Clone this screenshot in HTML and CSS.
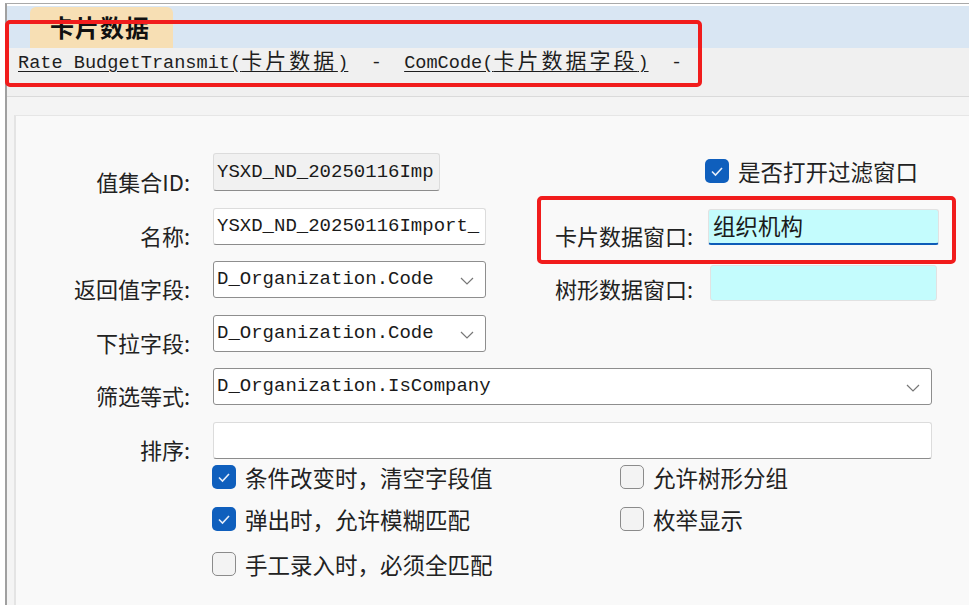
FILE: index.html
```html
<!DOCTYPE html>
<html lang="zh-CN">
<head>
<meta charset="utf-8">
<title>卡片数据</title>
<link rel="stylesheet" href="styles.css">
</head>
<body>
<div class="window">
  <div class="tabbar">
    <div class="tab">卡片数据</div>
  </div>
  <div class="linkrow"><a class="lnk">Rate BudgetTransmit(<span class="cjk">卡片数据</span>)</a><span class="sep">  -  </span><a class="lnk">ComCode(<span class="cjk">卡片数据字段</span>)</a><span class="sep">  -</span></div>
  <div class="content">
    <div class="panel">
      <div class="form">
        <label class="lbl r1">值集合ID:</label>
        <div class="field ro r1 w227"><span class="mono">YSXD_ND_20250116Imp</span></div>
        <div class="chk-top r1">
          <span class="cb on"><svg viewBox="0 0 24 24" width="24" height="24"><polyline points="7,12.5 10.5,16 17,9" fill="none" stroke="#e6eefa" stroke-width="1.6"/></svg></span>
          <span class="ctext">是否打开过滤窗口</span>
        </div>

        <label class="lbl r2">名称:</label>
        <div class="field r2"><span class="mono">YSXD_ND_20250116Import_</span></div>
        <label class="lbl rl r2">卡片数据窗口:</label>
        <div class="cyan active r2"><span class="ctv">组织机构</span></div>

        <label class="lbl r3">返回值字段:</label>
        <div class="field sel r3"><span class="mono">D_Organization.Code</span><svg class="chev" viewBox="0 0 14 8" width="14" height="8"><polyline points="1,1 7,7 13,1" fill="none" stroke="#777" stroke-width="1.2"/></svg></div>
        <label class="lbl rl r3">树形数据窗口:</label>
        <div class="cyan r3 tree"></div>

        <label class="lbl r4">下拉字段:</label>
        <div class="field sel r4"><span class="mono">D_Organization.Code</span><svg class="chev" viewBox="0 0 14 8" width="14" height="8"><polyline points="1,1 7,7 13,1" fill="none" stroke="#777" stroke-width="1.2"/></svg></div>

        <label class="lbl r5">筛选等式:</label>
        <div class="field sel wide r5"><span class="mono">D_Organization.IsCompany</span><svg class="chev" viewBox="0 0 14 8" width="14" height="8"><polyline points="1,1 7,7 13,1" fill="none" stroke="#777" stroke-width="1.2"/></svg></div>

        <label class="lbl r6">排序:</label>
        <div class="field wide r6"></div>
      </div>

      <div class="checks">
        <div class="chk"><span class="cb on"><svg viewBox="0 0 24 24" width="24" height="24"><polyline points="7,12.5 10.5,16 17,9" fill="none" stroke="#e6eefa" stroke-width="1.6"/></svg></span><span class="ctext">条件改变时，清空字段值</span></div>
        <div class="chk"><span class="cb"></span><span class="ctext">允许树形分组</span></div>
        <div class="chk"><span class="cb on"><svg viewBox="0 0 24 24" width="24" height="24"><polyline points="7,12.5 10.5,16 17,9" fill="none" stroke="#e6eefa" stroke-width="1.6"/></svg></span><span class="ctext">弹出时，允许模糊匹配</span></div>
        <div class="chk"><span class="cb"></span><span class="ctext">枚举显示</span></div>
        <div class="chk late"><span class="cb"></span><span class="ctext">手工录入时，必须全匹配</span></div>
      </div>
    </div>
  </div>
</div>
<div class="mark mark1"></div>
<div class="mark mark2"></div>
</body>
</html>
```

FILE: styles.css
```css
html, body {
  margin: 0;
  padding: 0;
  background: #ffffff;
  overflow: hidden;
}
body {
  position: relative;
  width: 969px;
  height: 605px;
  font-family: "Noto Sans CJK SC", "Noto Sans", sans-serif;
  color: #222;
}
.window {
  margin: 3px 0 0 5px;
  height: 601px;
  border-top: 1px solid #a9a9a9;
  border-left: 2px solid #a0a0a0;
  padding-top: 2px;
  background: #ffffff;
  display: flex;
  flex-direction: column;
}
.tabbar {
  height: 42px;
  background: #d9e6f3;
  padding-top: 1px;
  box-sizing: border-box;
  flex: none;
}
.tab {
  margin-left: 23px;
  width: 143px;
  height: 41px;
  background: #f7dfb4;
  border-radius: 6px 6px 0 0;
  font-weight: 700;
  font-size: 24px;
  line-height: 40px;
  padding-left: 20px;
  box-sizing: border-box;
  color: #111;
  letter-spacing: 1px;
}
.linkrow {
  height: 49px;
  flex: none;
  background: #f0f0f0;
  border-bottom: 1px solid #dadada;
  padding: 1px 0 0 11px;
  box-sizing: border-box;
  font-family: "Liberation Mono", "DejaVu Sans Mono", monospace;
  font-size: 18.6px;
  line-height: 26px;
  white-space: nowrap;
  color: #1e1e1e;
}
.lnk {
  text-decoration: underline;
  text-underline-offset: 3px;
  color: #1e1e1e;
}
.lnk .cjk {
  font-family: "Noto Sans CJK SC", sans-serif;
  font-size: 21px;
  line-height: 20px;
  letter-spacing: 3px;
}
.sep { color: #1e1e1e; white-space: pre; }
.content {
  flex: 1;
  background: #f4f4f4;
  padding: 18px 0 0 7px;
  display: flex;
}
.panel {
  flex: 1;
  border-left: 2px solid #e4e4e4;
  border-top: 1px solid #e6e6e6;
  background: #f9f9f9;
  padding-top: 38px;
}
.form {
  display: grid;
  grid-template-columns: 174px 296px 207px 246px;
  grid-template-rows: repeat(6, 37px);
  row-gap: 16.6px;
  align-items: end;
}
.r1 { grid-row: 1; }
.r2 { grid-row: 2; }
.r3 { grid-row: 3; }
.r4 { grid-row: 4; }
.r5 { grid-row: 5; }
.r6 { grid-row: 6; }
.lbl {
  grid-column: 1;
  justify-self: end;
  font-size: 22px;
  line-height: 22px;
  margin-bottom: -1px;
  color: #222;
  white-space: nowrap;
}
.lbl.rl { grid-column: 3; }
.field {
  grid-column: 2;
  margin-left: 23px;
  width: 273px;
  height: 37px;
  box-sizing: border-box;
  background: #ffffff;
  border: 1px solid #dcdcdc;
  border-bottom: 1px solid #8c8c8c;
  border-radius: 3px;
  display: flex;
  align-items: center;
  padding: 0 0 1px 3px;
  position: relative;
  overflow: hidden;
}
.field.ro {
  width: 227px;
  background: #f1f1f1;
  height: 38px;
}
.field.sel {
  border: 1px solid #8e8e8e;
}
.field.wide {
  grid-column: 2 / span 3;
  width: 719px;
}
.mono {
  font-family: "Liberation Mono", "DejaVu Sans Mono", monospace;
  font-size: 19px;
  color: #1a1a1a;
  white-space: pre;
}
.chev {
  position: absolute;
  right: 11px;
  top: 15px;
}
.chk-top {
  grid-column: 4;
  margin-left: 12px;
  align-self: center;
  display: flex;
  align-items: center;
  gap: 9px;
  margin-top: -4px;
}
.cyan {
  grid-column: 4;
  margin-left: 15px;
  width: 231px;
  height: 36px;
  box-sizing: border-box;
  background: #c4fcfd;
  border: 1px solid #e2e2e2;
  border-radius: 3px;
  display: flex;
  align-items: center;
  padding: 0 0 2px 4px;
}
.cyan.active {
  border-bottom: 2px solid #0e5cb8;
  align-items: flex-start;
  padding-top: 1px;
}
.cyan.tree {
  margin-left: 17px;
  width: 227px;
  margin-bottom: -3px;
}
.ctv {
  font-size: 22.5px;
  line-height: 28px;
  color: #1a1a1a;
}
.checks {
  display: grid;
  grid-template-columns: 408px auto;
  grid-auto-rows: 24px;
  row-gap: 18px;
  padding: 6px 0 0 196px;
}
.chk {
  display: flex;
  align-items: center;
  gap: 9px;
}
.chk.late { margin-top: 6px; }
.cb {
  width: 24px;
  height: 24px;
  box-sizing: border-box;
  border-radius: 5px;
  background: #f3f3f3;
  border: 1.5px solid #8b8b8b;
  flex: none;
  display: block;
}
.cb.on {
  background: #0f5fbd;
  border: none;
}
.cb svg { display: block; }
.ctext {
  font-size: 22.5px;
  line-height: 24px;
  color: #222;
  white-space: nowrap;
}
.mark {
  position: absolute;
  border: 4px solid #f11c1c;
  border-radius: 5px;
  box-sizing: border-box;
  pointer-events: none;
}
.mark1 {
  left: 5px;
  top: 20px;
  width: 697px;
  height: 67px;
}
.mark2 {
  left: 537px;
  top: 196px;
  width: 419px;
  height: 68px;
}
```
